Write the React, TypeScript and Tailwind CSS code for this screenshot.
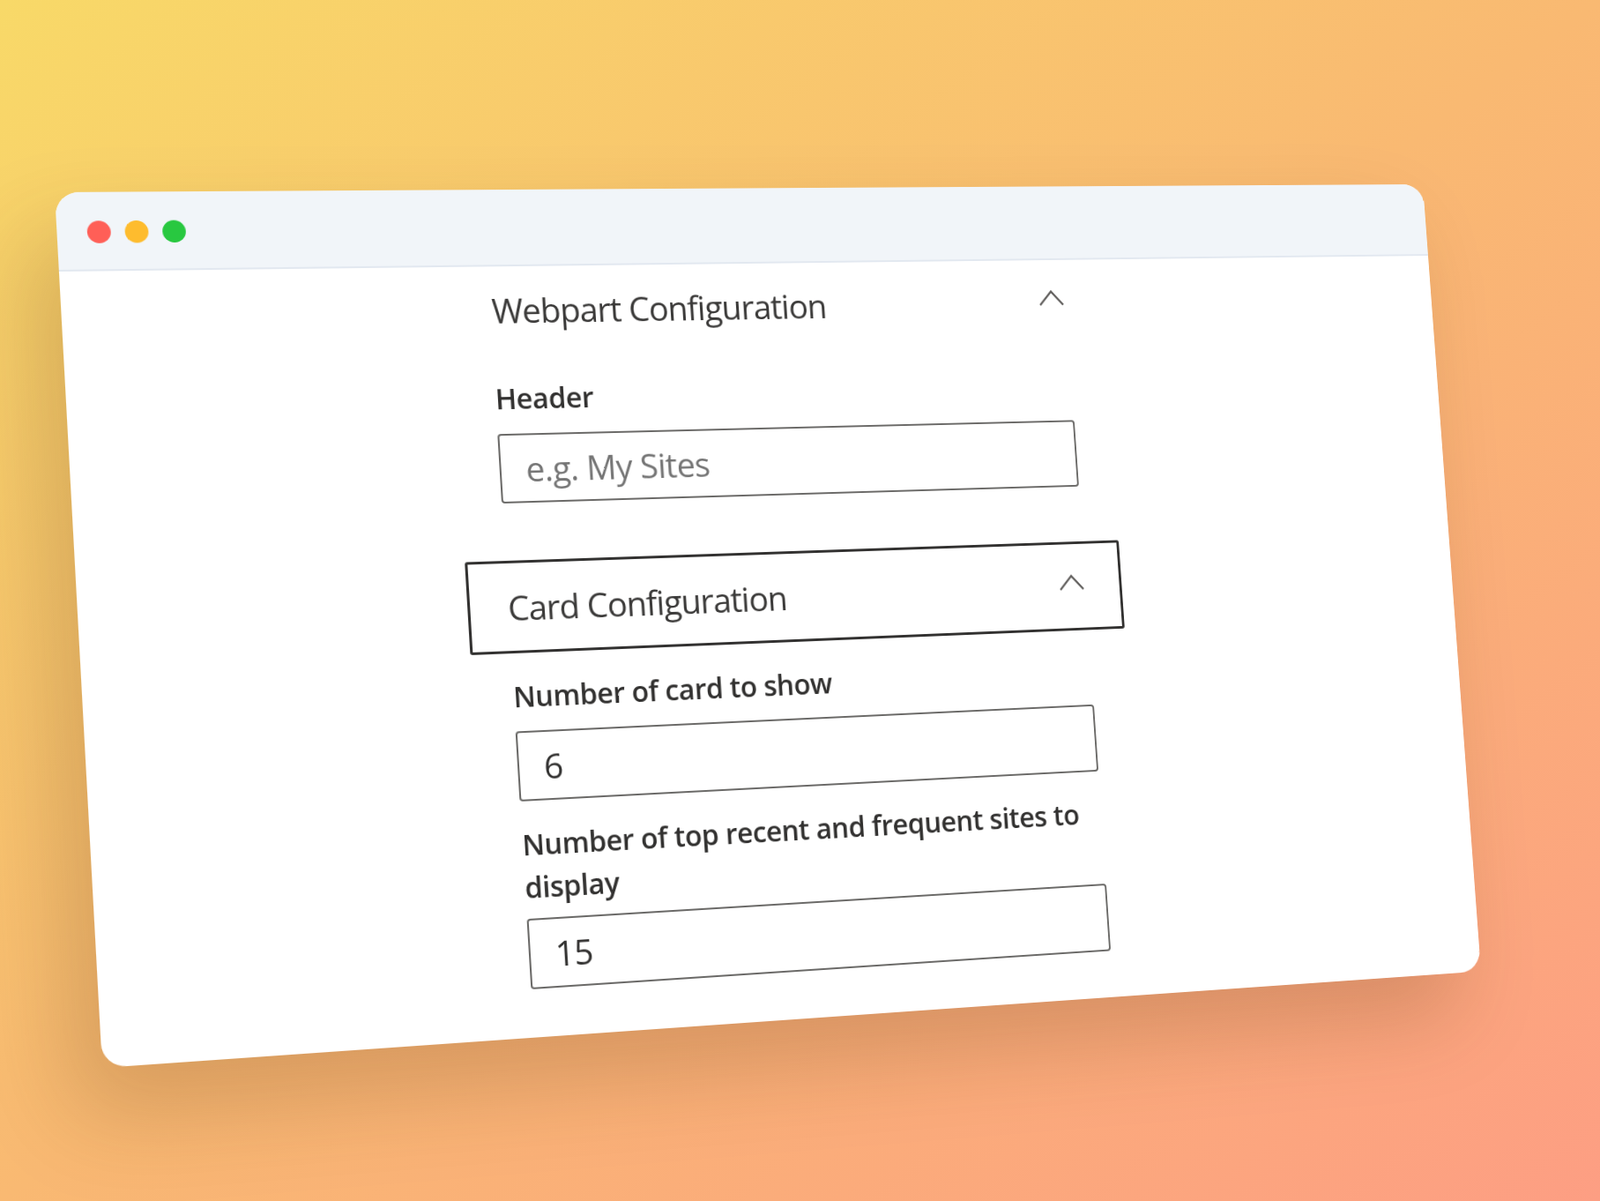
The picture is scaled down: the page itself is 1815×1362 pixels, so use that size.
const font = "font-['Open_Sans','Noto_Sans',sans-serif]";

function Chevron({ className }: { className?: string }) {
  return (
    <svg viewBox="0 0 32 20" className={className} fill="none" stroke="#605e5c" strokeWidth="2.4">
      <path d="M2 18.5 16 2.5 30 18.5" />
    </svg>
  );
}

function Field({
  label,
  value,
  placeholder,
  className,
  labelClass,
}: {
  label: string;
  value?: string;
  placeholder?: string;
  className?: string;
  labelClass: string;
}) {
  return (
    <div className={className}>
      <label className={`block text-[32px] leading-[48px] font-semibold tracking-[-0.45px] text-[#323130] ${labelClass}`}>
        {label}
      </label>
      <input
        readOnly
        value={value}
        placeholder={placeholder}
        className="block h-[79px] w-[675px] rounded-[4px] border-[2.5px] border-[#6a6967] bg-white px-[27.5px] text-[38px] tracking-[-0.7px] text-[#323130] outline-none placeholder:text-[#757575]"
      />
    </div>
  );
}

export default function App() {
  return (
    <div className={`relative h-[1362px] w-[1815px] overflow-hidden bg-[linear-gradient(to_bottom_right,#f8d968,#f9b972_50%,#fd9e83)] ${font}`}>
      <div className="absolute top-0 left-0 h-[960px] w-[1600px] origin-top-left overflow-hidden rounded-[26px] bg-white shadow-[-30px_50px_100px_rgba(90,50,20,0.22)] [transform:matrix3d(1.08206,0.008886,0,0.00006943,0.054756,1.018783,0,-0.000012875,0,0,1,0,62,218,0,1)]">
        <div className="flex h-[88px] items-center gap-[15px] border-b-2 border-[#e2e8f0] bg-[#f1f5f9] pt-[2px] pl-[32px]">
          <span className="size-[25px] rounded-full bg-[#ff5f57]" />
          <span className="size-[25px] rounded-full bg-[#febc2e]" />
          <span className="size-[25px] rounded-full bg-[#28c840]" />
        </div>

        <div className="ml-[420px] w-[764px] pt-[26px]">
          <div className="flex h-[48px] items-center justify-between pr-[46px] pl-[47px]">
            <span className="text-[38px] leading-[48px] tracking-[-1px] text-[#3b3a39]">Webpart Configuration</span>
            <Chevron className="mb-[10px] h-[20px] w-[32px]" />
          </div>

          <Field className="mt-[53px] pl-[45px]" labelClass="mb-[16px]" label="Header" placeholder="e.g. My Sites" />

          <div className="mt-[65px] flex h-[105px] items-center justify-between rounded-[3px] border-[3px] border-[#323130] pr-[42px] pl-[42px]">
            <span className="text-[38px] leading-[48px] tracking-[-1px] text-[#3b3a39]">Card Configuration</span>
            <Chevron className="mb-[10px] h-[20px] w-[32px]" />
          </div>

          <Field className="mt-[25px] pl-[45px]" labelClass="mb-[15px]" label="Number of card to show" value="6" />
          <Field className="mt-[25px] pl-[45px]" labelClass="mb-[11px]" label="Number of top recent and frequent sites to display" value="15" />
        </div>
      </div>
    </div>
  );
}
